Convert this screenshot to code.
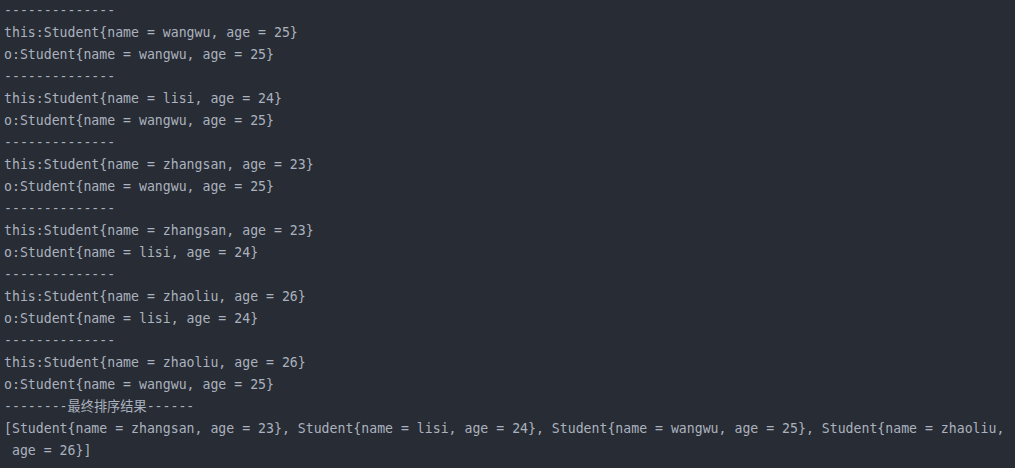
const lines = [
  '--------------',
  'this:Student{name = wangwu, age = 25}',
  'o:Student{name = wangwu, age = 25}',
  '--------------',
  'this:Student{name = lisi, age = 24}',
  'o:Student{name = wangwu, age = 25}',
  '--------------',
  'this:Student{name = zhangsan, age = 23}',
  'o:Student{name = wangwu, age = 25}',
  '--------------',
  'this:Student{name = zhangsan, age = 23}',
  'o:Student{name = lisi, age = 24}',
  '--------------',
  'this:Student{name = zhaoliu, age = 26}',
  'o:Student{name = lisi, age = 24}',
  '--------------',
  'this:Student{name = zhaoliu, age = 26}',
  'o:Student{name = wangwu, age = 25}',
  '--------最终排序结果------',
  '[Student{name = zhangsan, age = 23}, Student{name = lisi, age = 24}, Student{name = wangwu, age = 25}, Student{name = zhaoliu,',
  ' age = 26}]',
];

export default function App() {
  return (
    <div className="w-[1015px] h-[468px] overflow-hidden bg-[#282c34]">
      {/* console output */}
      <div className="pl-[4px] text-[#abb2bf] text-[13.2px] leading-[22px] font-['DejaVu_Sans_Mono','Noto_Sans_CJK_SC',monospace]">
        {lines.map((line, i) => (
          <div key={i} className="whitespace-pre h-[22px]">
            {line}
          </div>
        ))}
      </div>
    </div>
  );
}
